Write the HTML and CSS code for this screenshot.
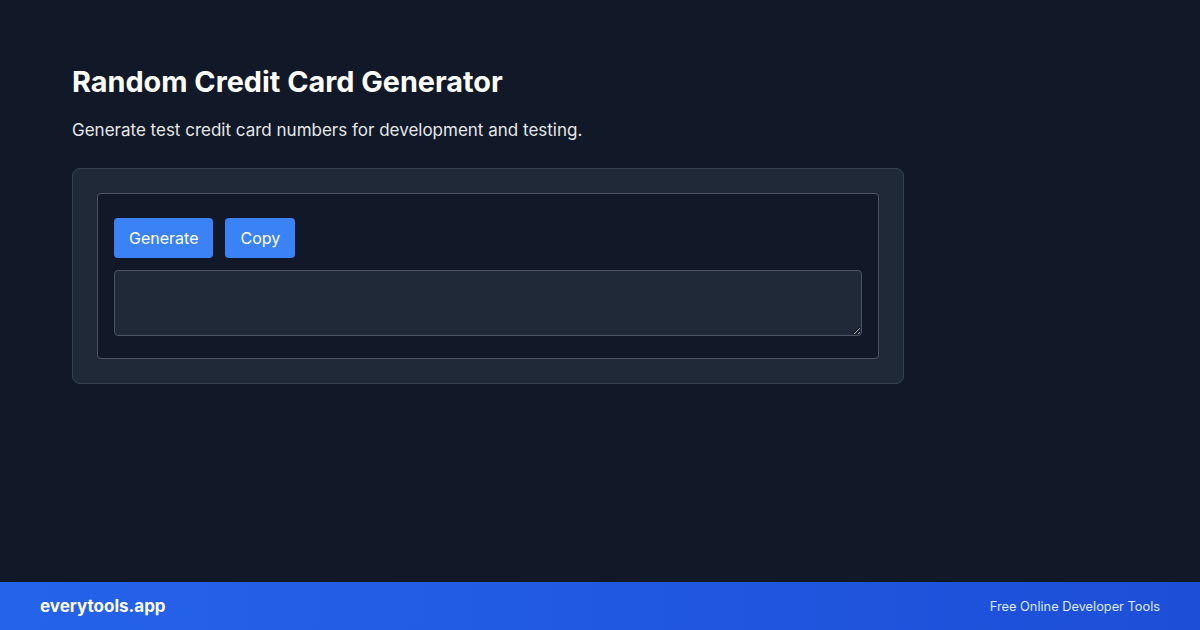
FILE: index.html
```html
<!DOCTYPE html>
<html lang="en">
<head>
<meta charset="utf-8">
<title>Random Credit Card Generator</title>
<link rel="stylesheet" href="styles.css">
</head>
<body>
<div class="page">
  <main class="main">
    <h1 class="title">Random Credit Card Generator</h1>
    <p class="subtitle">Generate test credit card numbers for development and testing.</p>
    <section class="card">
      <div class="tool">
        <div class="actions">
          <button class="btn">Generate</button>
          <button class="btn">Copy</button>
        </div>
        <textarea class="output"></textarea>
      </div>
    </section>
  </main>
  <footer class="footer">
    <span class="brand">everytools.app</span>
    <span class="tagline">Free Online Developer Tools</span>
  </footer>
</div>
</body>
</html>
```
FILE: styles.css
```css
* { box-sizing: border-box; }
html, body { margin: 0; padding: 0; }
body {
  width: 1200px;
  height: 630px;
  background: #111827;
  font-family: Inter, "Noto Sans", sans-serif;
  color: #ffffff;
  overflow: hidden;
}
.page {
  height: 630px;
  display: flex;
  flex-direction: column;
}
.main {
  flex: 1;
  padding: 64px 72px 0;
}
.title {
  margin: 0;
  font-size: 28.8px;
  line-height: 36px;
  font-weight: 700;
  color: #ffffff;
}
.subtitle {
  margin: 18px 0 0;
  font-size: 17px;
  line-height: 24px;
  color: #e5e7eb;
}
.card {
  margin-top: 26px;
  width: 832px;
  background: #1f2937;
  border: 1px solid #374151;
  border-radius: 8px;
  padding: 24px;
}
.tool {
  background: #111827;
  border: 1px solid #4b5563;
  border-radius: 4px;
  padding: 24px 16px 22px;
}
.actions {
  display: flex;
  gap: 12px;
}
.btn {
  height: 40px;
  padding: 0 15px;
  background: #3b82f6;
  color: #ffffff;
  border: none;
  border-radius: 4px;
  font-family: Inter, "Noto Sans", sans-serif;
  font-size: 16px;
}
.output {
  display: block;
  margin-top: 12px;
  width: 100%;
  height: 66px;
  background: #1f2937;
  border: 1px solid #4b5563;
  border-radius: 4px;
  color: #ffffff;
  resize: vertical;
}
.footer {
  height: 48px;
  display: flex;
  align-items: center;
  justify-content: space-between;
  padding: 0 40px;
  background: linear-gradient(90deg, #2563eb, #1d4ed8);
}
.brand {
  font-size: 17px;
  font-weight: 700;
  color: #ffffff;
}
.tagline {
  font-size: 12.8px;
  color: #dbeafe;
}
```
